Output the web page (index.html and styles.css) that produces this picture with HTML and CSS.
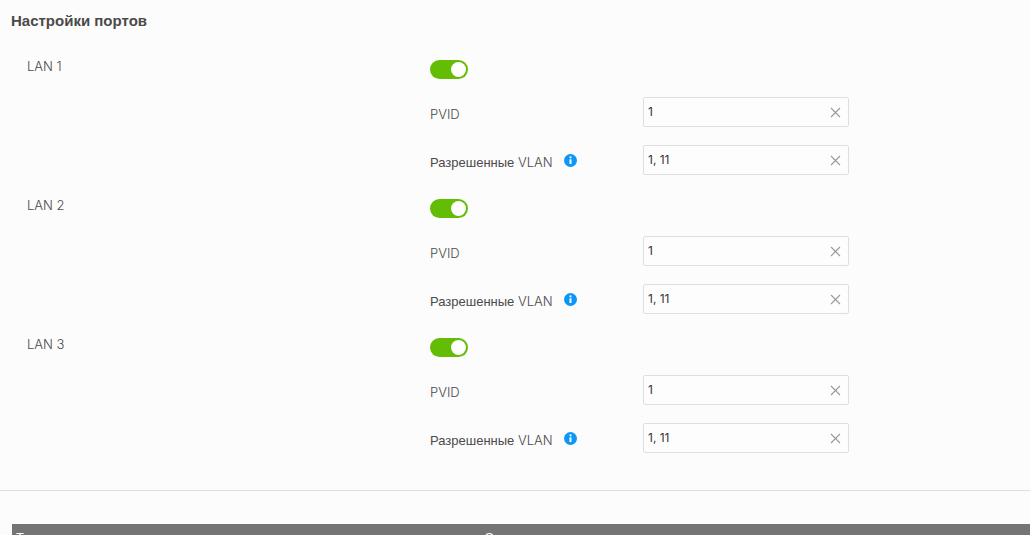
FILE: index.html
```html
<!DOCTYPE html>
<html lang="ru">
<head>
  <meta charset="UTF-8">
  <title>Настройки портов</title>
  <meta name="viewport" content="width=device-width, initial-scale=1.0">
  <link rel="stylesheet" href="styles.css">
</head>
<body>
<svg class="sprite" aria-hidden="true">
  <symbol id="icon-info" viewBox="0 0 13 13">
    <circle cx="6.5" cy="6.5" r="6.5" fill="#0c97f8"/>
    <circle cx="6.5" cy="3.3" r="1.1" fill="#fff"/>
    <path d="M5.5 5.3h2v4.7h-2z" fill="#fff"/>
  </symbol>
  <symbol id="icon-clear" viewBox="0 0 11 11">
    <path d="M1 1l9 9M10 1l-9 9" fill="none" stroke="#999" stroke-width="1.1"/>
  </symbol>
</svg>

<main>
  <section class="ports">
    <h2>Настройки портов</h2>

    <div class="port">
      <label class="port-name" for="lan1">LAN 1</label>
      <div class="port-body">
        <input type="checkbox" class="switch" id="lan1" checked>
        <div class="field">
          <label for="pvid1">PVID</label>
          <div class="text-box">
            <input type="text" id="pvid1" value="1">
            <button type="button" class="clear" aria-label="Очистить"><svg><use href="#icon-clear"/></svg></button>
          </div>
        </div>
        <div class="field">
          <label for="vlan1"><span class="cyr">Разрешенные</span> VLAN <svg class="info"><use href="#icon-info"/></svg></label>
          <div class="text-box">
            <input type="text" id="vlan1" value="1, 11">
            <button type="button" class="clear" aria-label="Очистить"><svg><use href="#icon-clear"/></svg></button>
          </div>
        </div>
      </div>
    </div>

    <div class="port">
      <label class="port-name" for="lan2">LAN 2</label>
      <div class="port-body">
        <input type="checkbox" class="switch" id="lan2" checked>
        <div class="field">
          <label for="pvid2">PVID</label>
          <div class="text-box">
            <input type="text" id="pvid2" value="1">
            <button type="button" class="clear" aria-label="Очистить"><svg><use href="#icon-clear"/></svg></button>
          </div>
        </div>
        <div class="field">
          <label for="vlan2"><span class="cyr">Разрешенные</span> VLAN <svg class="info"><use href="#icon-info"/></svg></label>
          <div class="text-box">
            <input type="text" id="vlan2" value="1, 11">
            <button type="button" class="clear" aria-label="Очистить"><svg><use href="#icon-clear"/></svg></button>
          </div>
        </div>
      </div>
    </div>

    <div class="port">
      <label class="port-name" for="lan3">LAN 3</label>
      <div class="port-body">
        <input type="checkbox" class="switch" id="lan3" checked>
        <div class="field">
          <label for="pvid3">PVID</label>
          <div class="text-box">
            <input type="text" id="pvid3" value="1">
            <button type="button" class="clear" aria-label="Очистить"><svg><use href="#icon-clear"/></svg></button>
          </div>
        </div>
        <div class="field">
          <label for="vlan3"><span class="cyr">Разрешенные</span> VLAN <svg class="info"><use href="#icon-info"/></svg></label>
          <div class="text-box">
            <input type="text" id="vlan3" value="1, 11">
            <button type="button" class="clear" aria-label="Очистить"><svg><use href="#icon-clear"/></svg></button>
          </div>
        </div>
      </div>
    </div>
  </section>

  <section class="list">
    <table>
      <thead>
        <tr>
          <th>Тип</th>
          <th>Состояние</th>
        </tr>
      </thead>
    </table>
  </section>
</main>
</body>
</html>
```
FILE: styles.css
```css
:root {
  --text: #4a4a4a;
  --line: #dfdfdf;
  --green: #62bd04;
}
* {
  box-sizing: border-box;
}
html {
  height: 100%;
  overflow: hidden;
}
body {
  margin: 0;
  height: 100%;
  overflow: hidden;
  background: #fcfcfc;
  color: var(--text);
  font-family: Inter, "Liberation Sans", Arial, sans-serif;
  font-size: 13px;
  line-height: 16px;
}
.sprite {
  display: none;
}
.ports {
  padding: 12px 11px 13px;
  border-bottom: 1px solid var(--line);
}
h2 {
  margin: 0 0 30px;
  font-family: "Liberation Sans", Arial, sans-serif;
  font-size: 15px;
  line-height: 18px;
}
.port {
  display: grid;
  grid-template-columns: 13fr 19fr;
  padding-left: 16px;
  margin-bottom: 24px;
}
.port-name {
  font-weight: 300;
  line-height: 12px;
}
.port-body {
  display: flex;
  flex-direction: column;
  align-items: flex-start;
  gap: 18px;
}
.switch {
  appearance: none;
  width: 38px;
  height: 19px;
  margin: 0;
  padding: 2px;
  border-radius: 10px;
  background: #bbb;
  display: flex;
  cursor: pointer;
}
.switch::before {
  content: "";
  width: 15px;
  height: 15px;
  border-radius: 50%;
  background: #fff;
}
.switch:checked {
  background: var(--green);
  justify-content: flex-end;
}
.field {
  display: grid;
  grid-template-columns: 213px 206px;
}
.field label {
  padding-top: 9px;
  font-weight: 300;
}
.cyr {
  font-family: "Liberation Sans", Arial, sans-serif;
}
.info {
  width: 13px;
  height: 13px;
  margin-left: 8px;
}
.text-box {
  display: flex;
  align-items: center;
  height: 30px;
  border: 1px solid var(--line);
  border-radius: 2px;
  background: #fdfdfd;
}
.text-box input {
  flex: 1;
  min-width: 0;
  padding: 0 4px 1px;
  border: 0;
  background: none;
  color: #333;
  font: inherit;
  font-size: 12px;
  outline: none;
}
.clear {
  display: flex;
  padding: 0 7px;
  border: 0;
  background: none;
  cursor: pointer;
}
.clear svg {
  width: 11px;
  height: 11px;
}
.list {
  padding: 33px 0 0 12px;
}
table {
  width: 100%;
  border-collapse: collapse;
  table-layout: fixed;
}
th {
  padding: 6px 4px;
  background: #757575;
  color: #fff;
  font-family: "Liberation Sans", Arial, sans-serif;
  font-weight: normal;
  text-align: left;
}
th:first-child {
  width: 46%;
}
```
